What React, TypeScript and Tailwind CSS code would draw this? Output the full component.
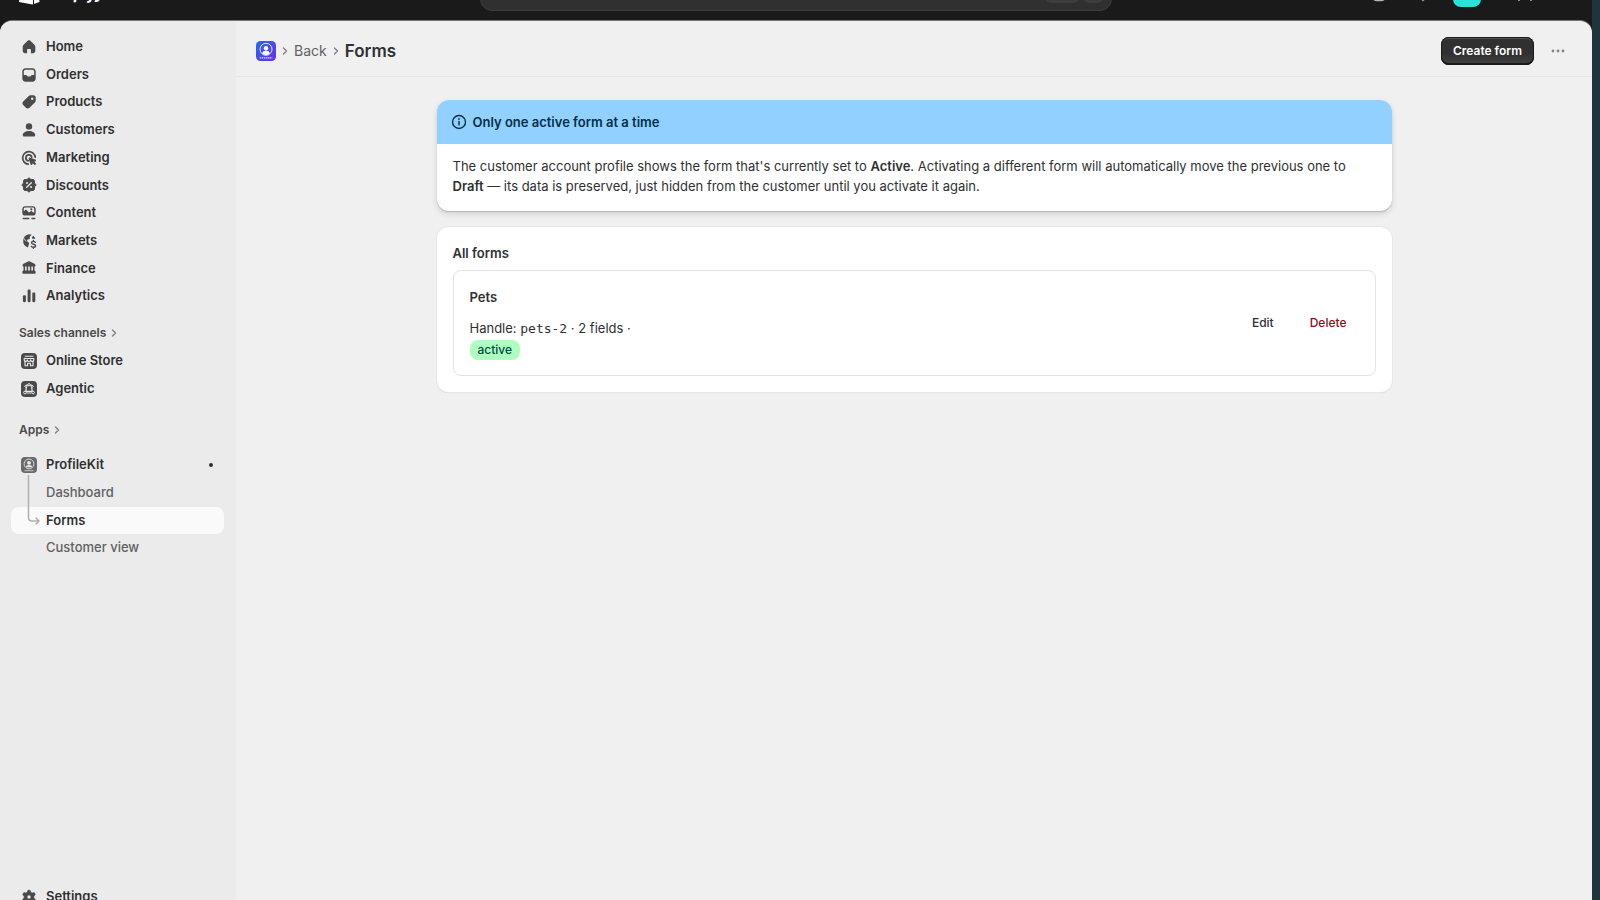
import React, { useState } from 'react';
import type { ReactNode } from 'react';

function Icon({ children }: { children: ReactNode }) {
  return (
    <svg viewBox="0 0 16 16" className="size-4 shrink-0" fill="#4a4a4a" aria-hidden="true">
      {children}
    </svg>
  );
}

const icons: Record<string, ReactNode> = {
  home: <path d="M8 1.2c.4 0 .8.2 1.1.4l4.3 4.1c.6.5.9 1.2.9 2V12c0 1.2-1 2.2-2.2 2.2H9.900V11c0-.6-.4-1-1-1H7.100c-.6 0-1 .4-1 1v3.200H3.900c-1.200 0-2.200-1-2.200-2.200V7.700c0-.8.3-1.500.9-2l4.300-4.100c.3-.2.700-.4 1.100-.4z" />,
  orders: (
    <path
      fillRule="evenodd"
      d="M4.500 1.300h7c1.800 0 3.200 1.400 3.200 3.200v7c0 1.800-1.400 3.200-3.200 3.200h-7c-1.800 0-3.200-1.400-3.200-3.200v-7c0-1.800 1.400-3.200 3.200-3.200zM4.600 2.800c-1 0-1.800.8-1.800 1.800V8h2c.5 0 .9.200 1.200.6l.5.700c.1.200.300.3.500.3h2c.2 0 .4-.1.500-.3l.5-.7c.3-.4.700-.6 1.200-.6h2V4.600c0-1-.8-1.800-1.800-1.800z"
    />
  ),
  products: (
    <path
      fillRule="evenodd"
      d="M9.600 1.300h2.900c1.200 0 2.200 1 2.200 2.200v2.900c0 .8-.3 1.500-.9 2.100l-5.300 5.300c-1 1-2.600 1-3.600 0l-2.700-2.700c-1-1-1-2.600 0-3.600l5.300-5.300c.6-.6 1.300-.9 2.100-.9zM11.200 6a1.200 1.200 0 1 0 0-2.400 1.200 1.200 0 0 0 0 2.400z"
    />
  ),
  customers: (
    <>
      <circle cx="8" cy="4.400" r="3.200" />
      <path d="M1.800 13.200c0-2.700 2.700-4.300 6.200-4.300s6.200 1.600 6.200 4.300c0 .8-.6 1.300-1.400 1.300H3.200c-.8 0-1.400-.5-1.400-1.300z" />
    </>
  ),
  marketing: (
    <>
      <path fill="none" stroke="#4a4a4a" strokeWidth="1.700" strokeLinecap="round" d="M14.200 7.200A6.300 6.300 0 1 0 7.300 14.200" />
      <path fill="none" stroke="#4a4a4a" strokeWidth="1.700" strokeLinecap="round" d="M10.800 7.200a3 3 0 1 0-3.500 3.600" />
      <path d="M7.600 8.600c-.2-.6.4-1.200 1-1l5.800 2c.8.3.8 1.300.1 1.600l-1.200.6 1.500 1.500c.7.8-.6 2.200-1.400 1.400l-1.500-1.500-.7 1.300c-.3.700-1.300.6-1.600-.1z" />
    </>
  ),
  discounts: (
    <>
      <path
        stroke="#4a4a4a"
        strokeWidth="1"
        strokeLinejoin="round"
        d="M8 .8l1.900 1.700h2.600l.9.900.1 2.700L15.200 8l-1.700 1.900-.1 2.700-.9.900H9.900L8 15.200l-1.900-1.700H3.500l-.9-.9-.1-2.700L.8 8l1.700-1.900.1-2.700.9-.9h2.600z"
      />
      <path stroke="#ebebeb" strokeWidth="1.300" strokeLinecap="round" d="M10.300 5.700l-4.600 4.600" />
      <circle cx="6" cy="6" r="1" fill="#ebebeb" />
      <circle cx="10" cy="10" r="1" fill="#ebebeb" />
    </>
  ),
  content: (
    <>
      <path
        fillRule="evenodd"
        d="M4 1.200h8c1.500 0 2.700 1.200 2.700 2.700v4c0 1.500-1.200 2.700-2.700 2.700H4c-1.500 0-2.700-1.200-2.700-2.700v-4c0-1.500 1.200-2.700 2.700-2.700zM2.800 6.200l1.500-1.100c.5-.4 1.100-.3 1.500.1l2 2c.2.200.5.200.7 0l1-.8c.5-.4 1.100-.4 1.600 0l2.100 1.500V4c0-.8-.6-1.400-1.400-1.400H4.200c-.8 0-1.400.6-1.400 1.400zM10.300 5.400a1.100 1.100 0 1 0 0-2.200 1.100 1.100 0 0 0 0 2.200z"
      />
      <path stroke="#4a4a4a" strokeWidth="1.400" strokeLinecap="round" d="M2.200 13.500h5.600M11 13.500h2.800" />
    </>
  ),
  markets: (
    <>
      <path d="M8 1.200c1 0 2 .2 2.800.6L8.900 3.600c-.3.300-.4.800-.1 1.200.3.500.1 1-.4 1.200l-1.600.6c-.8.300-1 1.200-.4 1.800l1 .9c.6.500.8 1.200.5 1.900l-1 3.200A6.800 6.800 0 0 1 8 1.200z" />
      <path d="M12.200 2.700c1 .8 1.700 1.800 2.100 3h-2.200c-.8 0-1.300-.5-1.200-1.300z" />
      <path fill="none" stroke="#4a4a4a" strokeWidth="1.400" strokeLinecap="round" d="M14.300 9.300c-.4-.6-1-.9-1.900-.9-1.100 0-1.900.5-1.900 1.400 0 2.100 4 .9 4 3 0 .9-.8 1.500-2 1.500-1 0-1.700-.4-2.100-1M12.400 7.400v1M12.400 14.300v1" />
      <path fill="none" stroke="#ebebeb" strokeWidth=".8" strokeLinecap="round" d="M3 5.500l1.700 2.600" />
    </>
  ),
  finance: (
    <>
      <path d="M7.100 1.400c.6-.3 1.200-.3 1.800 0l4.600 2.300c.6.300 1 .9 1 1.500 0 .8-.6 1.300-1.300 1.300H2.800c-.7 0-1.300-.5-1.300-1.300 0-.6.400-1.200 1-1.500z" />
      <path stroke="#4a4a4a" strokeWidth="1.500" d="M3.300 6v5M6.400 6v5M9.600 6v5M12.700 6v5" />
      <path d="M2.700 10.500h10.600c.8 0 1.400.9 1.400 1.900 0 .8-.5 1.400-1.300 1.400H2.600c-.8 0-1.300-.6-1.300-1.400 0-1 .6-1.900 1.400-1.900z" />
    </>
  ),
  analytics: (
    <>
      <rect x="1.900" y="7.200" width="3" height="7" rx="1.100" />
      <rect x="6.600" y="1.600" width="3" height="12.600" rx="1.100" />
      <rect x="11.300" y="4.600" width="3" height="9.600" rx="1.100" />
    </>
  ),
  store: (
    <>
      <rect width="16" height="16" rx="4" />
      <path fill="none" stroke="#ebebeb" strokeWidth="1.100" strokeLinejoin="round" d="M3.700 3.300h8.600M3.200 5.500h9.600v1.200a1.500 1.500 0 0 1-3.200.2 1.600 1.600 0 0 1-3.200 0 1.500 1.500 0 0 1-3.200-.2zM4 8.500V12.700h2.600V10.200h2.800v2.500H12V8.500" />
    </>
  ),
  agentic: (
    <>
      <rect width="16" height="16" rx="4" />
      <path fill="none" stroke="#ebebeb" strokeWidth="1.200" strokeLinejoin="round" d="M5.600 4.200h4.800l.8 6.200H4.800z" />
      <g fill="#4a4a4a" stroke="#ebebeb" strokeWidth="1">
        <circle cx="8" cy="3.700" r="1.100" />
        <circle cx="4.900" cy="5.300" r="1" />
        <circle cx="11.100" cy="5.300" r="1" />
        <circle cx="3.900" cy="11.500" r="1.300" />
        <circle cx="12.100" cy="11.500" r="1.300" />
      </g>
      <path stroke="#ebebeb" strokeWidth="1" d="M5.500 12h5" />
    </>
  ),
  profile: (
    <>
      <rect width="16" height="16" rx="4" fill="#6a6a6a" />
      <circle cx="8" cy="6.900" r="4.900" fill="none" stroke="#d5d5d5" strokeWidth="1" />
      <circle cx="8" cy="5.800" r="1.900" fill="#ebebeb" />
      <path fill="#ebebeb" d="M4.800 10.300c.2-1.500 1.500-2.300 3.200-2.300s3 .8 3.200 2.300z" />
      <path stroke="#c5c5c5" strokeWidth="1" d="M3.500 13.700h9" />
    </>
  ),
  settings: (
    <path
      fillRule="evenodd"
      stroke="#4a4a4a"
      strokeWidth=".6"
      strokeLinejoin="round"
      d="M6.900 1.300h2.200l.7 2 1.300.7 2.100-.4 1.100 2L12.900 7.300v1.400l1.400 1.700-1.100 2-2.100-.4-1.300.7-.7 2H6.900l-.7-2-1.300-.7-2.100.4-1.100-2 1.400-1.700V7.300L1.700 5.600l1.100-2 2.100.4 1.300-.7zM8 10a2 2 0 1 0 0-4 2 2 0 0 0 0 4z"
    />
  ),
};

const mainLinks = [
  { label: 'Home', icon: 'home' },
  { label: 'Orders', icon: 'orders' },
  { label: 'Products', icon: 'products' },
  { label: 'Customers', icon: 'customers' },
  { label: 'Marketing', icon: 'marketing' },
  { label: 'Discounts', icon: 'discounts' },
  { label: 'Content', icon: 'content' },
  { label: 'Markets', icon: 'markets' },
  { label: 'Finance', icon: 'finance' },
  { label: 'Analytics', icon: 'analytics' },
];

const channelLinks = [
  { label: 'Online Store', icon: 'store' },
  { label: 'Agentic', icon: 'agentic' },
];

const appLinks = ['Dashboard', 'Forms', 'Customer view'];

function Chevron() {
  return (
    <svg viewBox="0 0 8 10" className="h-[10px] w-2 shrink-0" fill="none" stroke="#808080" strokeWidth="1.400" strokeLinecap="round" strokeLinejoin="round" aria-hidden="true">
      <path d="M2.500 2L5.500 5 2.500 8" />
    </svg>
  );
}

function NavLink({ label, icon }: { label: string; icon: string }) {
  return (
    <a href="#" className="flex items-center gap-[9px] rounded-lg px-[10px] text-[#303030]">
      <Icon>{icons[icon]}</Icon>
      {label}
    </a>
  );
}

function SectionTitle({ children }: { children: ReactNode }) {
  return (
    <button type="button" className="flex h-7 items-center gap-1 px-2 text-xs font-semibold text-[#4a4a4a]">
      {children}
      <Chevron />
    </button>
  );
}

function TopBar() {
  return (
    <div className="flex h-[21px] items-end overflow-hidden">
      <header className="flex h-14 w-full shrink-0 items-center justify-between px-[18px]">
        <div className="flex w-[220px] items-center gap-[3px]">
          <svg viewBox="0 0 24 28" className="h-7 w-6" aria-hidden="true">
            <path fill="#fff" d="M3.500 5L16.500 2l3 2.500L21.500 23 14.500 25.500 1 23z" />
            <path stroke="#1a1a1a" strokeWidth="1" d="M15.500 4v21.500" />
            <path fill="none" stroke="#1a1a1a" strokeWidth="2" d="M11.500 9c-3-1-5 1-4 3s4 3 3 5.500-3.500 1.500-5 .5" />
          </svg>
          <span className="text-base font-bold text-white italic">shopify</span>
        </div>
        <button type="button" aria-label="Search" className="flex h-9 w-[632px] items-center justify-end gap-1 rounded-xl border border-[#3d3d3d] bg-[#303030] pr-2">
          <span className="h-5 w-[34px] rounded-md bg-[#3d3d3d]" />
          <span className="h-5 w-5 rounded-md bg-[#3d3d3d]" />
        </button>
        <div className="flex w-[220px] items-center gap-5 pl-[15px]">
          <div className="flex gap-6">
            <svg viewBox="0 0 20 20" className="size-5" fill="none" stroke="#b5b5b5" strokeWidth="1.500" aria-hidden="true">
              <rect x="3" y="3" width="14" height="14.500" rx="5" />
            </svg>
            <svg viewBox="0 0 20 20" className="size-5" fill="none" stroke="#8a8a8a" strokeWidth="1.500" strokeLinecap="round" aria-hidden="true">
              <path d="M4 13l2-3V7a4 4 0 0 1 8 0v3l2 3zM9.500 17.500h1" />
            </svg>
          </div>
          <span className="size-7 rounded-lg bg-[#2ce2d8]" />
          <div className="pl-[14px]">
            <svg viewBox="0 0 20 20" className="size-5" fill="none" stroke="#b5b5b5" strokeWidth="1.500" aria-hidden="true">
              <path d="M4 18V6h12v12" />
            </svg>
          </div>
        </div>
      </header>
    </div>
  );
}

function Sidebar() {
  const [active, setActive] = useState('Forms');

  return (
    <aside className="flex w-[236px] shrink-0 flex-col bg-[#ebebeb] pt-3 pr-3 pl-[11px] text-[13px] font-semibold">
      <nav className="grid h-[277px] auto-rows-fr">
        {mainLinks.map((link) => (
          <NavLink key={link.label} {...link} />
        ))}
      </nav>

      <div className="mt-[9px]">
        <SectionTitle>Sales channels</SectionTitle>
        <nav className="grid h-14 auto-rows-fr">
          {channelLinks.map((link) => (
            <NavLink key={link.label} {...link} />
          ))}
        </nav>
      </div>

      <div className="mt-[13px]">
        <SectionTitle>Apps</SectionTitle>
        <div className="relative mt-[7px]">
          <nav className="grid h-[111px] auto-rows-fr">
            <a href="#" className="flex items-center gap-[9px] px-[10px] text-[#303030]">
              <Icon>{icons.profile}</Icon>
              ProfileKit
              <span className="mr-px ml-auto size-1 rounded-full bg-[#303030]" />
            </a>
            {appLinks.map((label) => (
              <a
                key={label}
                href="#"
                onClick={() => setActive(label)}
                className={
                  label === active
                    ? 'flex items-center rounded-lg bg-[#fafafa] pl-[35px] text-[#303030]'
                    : 'flex items-center rounded-lg pl-[35px] font-medium text-[#616161]'
                }
              >
                {label}
              </a>
            ))}
          </nav>
          {/* tree line from the app icon down to the open page */}
          <svg viewBox="0 0 14 50" className="absolute top-6 left-4 h-[50px] w-[14px]" fill="none" stroke="#b0b0b0" strokeWidth="1.500" strokeLinecap="round" strokeLinejoin="round" aria-hidden="true">
            <path d="M1.500 0V42.500Q1.500 46 5 46H12M9 43l3 3-3 3" />
          </svg>
        </div>
      </div>

      <nav className="mt-auto grid h-[17px] overflow-hidden">
        <a href="#" className="flex h-7 items-center gap-[9px] px-[10px] text-[#303030]">
          <Icon>{icons.settings}</Icon>
          Settings
        </a>
      </nav>
    </aside>
  );
}

function PageHeader() {
  return (
    <div className="flex h-14 items-center justify-between border-b border-[#e8e8e8] pt-1 pr-5 pl-5">
      <div className="flex items-center gap-[5px]">
        <svg viewBox="0 0 20 20" className="size-5" aria-hidden="true">
          <defs>
            <linearGradient id="logo" x1="0" y1="0" x2="1" y2="1">
              <stop offset="0" stopColor="#1f6bf5" />
              <stop offset="1" stopColor="#6d2ee0" />
            </linearGradient>
          </defs>
          <rect width="20" height="20" rx="4.500" fill="url(#logo)" />
          <circle cx="10" cy="8.300" r="6" fill="none" stroke="#e4e6ff" strokeWidth="1" />
          <circle cx="10" cy="7.200" r="2.200" fill="#fff" />
          <path fill="#fff" d="M6.200 12.300c.3-1.700 1.800-2.500 3.800-2.500s3.500.8 3.800 2.500c-1 1-2.300 1.600-3.800 1.600s-2.800-.6-3.800-1.600z" />
          <path stroke="#d6d2ff" strokeWidth="1.300" strokeDasharray="1.500 .5" d="M3.700 16.900h12.600" />
        </svg>
        <Chevron />
        <a href="#" className="text-sm text-[#616161]">Back</a>
        <Chevron />
        <h1 className="text-[17px] leading-6 font-semibold text-[#303030]">Forms</h1>
      </div>
      <div className="flex items-center gap-[10px]">
        <button
          type="button"
          className="h-7 rounded-lg bg-linear-to-b from-[#303030] from-60% to-[#454545] px-3 text-xs font-semibold text-white shadow-[inset_0_0_0_1px_#1a1a1a,inset_0_2px_0_#555,inset_0_-2px_0_#1a1a1a]"
        >
          Create form
        </button>
        <button type="button" aria-label="More actions" className="flex size-7 items-center justify-center">
          <svg viewBox="0 0 16 16" className="size-4" fill="#858585" aria-hidden="true">
            <circle cx="3" cy="8" r="1.400" />
            <circle cx="8" cy="8" r="1.400" />
            <circle cx="13" cy="8" r="1.400" />
          </svg>
        </button>
      </div>
    </div>
  );
}

export default function App() {
  return (
    <div className="flex h-screen overflow-hidden bg-[#20343b] font-['Inter',sans-serif]">
      <div className="mr-2 flex min-w-0 flex-1 flex-col bg-[#1a1a1a]">
        <TopBar />
        <div className="flex min-h-0 flex-1 overflow-hidden rounded-t-xl bg-[#f0f0f0] shadow-[0_-1px_0_#777]">
          <Sidebar />
          <main className="min-w-0 flex-1">
            <PageHeader />
            <div className="mx-auto mt-[23px] flex max-w-[955px] flex-col gap-4 text-[13px] leading-5 text-[#303030]">
              <section className="overflow-hidden rounded-xl bg-white shadow-[0_1px_1px_#b5b5b5,0_3px_6px_#00000020]">
                <div className="flex h-11 items-center gap-[6px] bg-[#91d0ff] px-[14px] text-[#003047]">
                  <svg viewBox="0 0 16 16" className="size-4 shrink-0" fill="none" stroke="currentColor" strokeWidth="1.400" strokeLinecap="round" aria-hidden="true">
                    <circle cx="8" cy="8" r="6.500" />
                    <path d="M8 7.500v3.500" />
                    <circle cx="8" cy="5" r=".3" />
                  </svg>
                  <h2 className="font-semibold">Only one active form at a time</h2>
                </div>
                <p className="px-4 pt-3 pb-[15px]">
                  The customer account profile shows the form that's currently set to <strong className="font-semibold">Active</strong>. Activating a different form will automatically move the previous one to <strong className="font-semibold">Draft</strong> — its data is preserved, just hidden from the customer until you activate it again.
                </p>
              </section>

              <section className="rounded-xl bg-white p-4 shadow-[0_0_0_1px_#e8e8e8,0_1px_1px_#c5c5c5]">
                <h2 className="font-semibold">All forms</h2>
                <div className="mt-[7px] flex items-center justify-between rounded-lg border border-[#e3e3e3] px-4 py-[15px]">
                  <div className="w-[172px]">
                    <h3 className="leading-[22px] font-semibold">Pets</h3>
                    <p className="mt-[10px]">
                      Handle: <code className="font-['DejaVu_Sans_Mono',monospace]">pets-2</code> · 2 fields ·{' '}
                      <span className="inline-block rounded-lg bg-[#affebf] px-2 text-xs leading-5 font-medium text-[#014b40]">active</span>
                    </p>
                  </div>
                  <div className="flex text-xs font-medium">
                    <button type="button" className="h-7 px-3">Edit</button>
                    <button type="button" className="ml-3 h-7 px-3 text-[#8e0b21]">Delete</button>
                  </div>
                </div>
              </section>
            </div>
          </main>
        </div>
      </div>
    </div>
  );
}
